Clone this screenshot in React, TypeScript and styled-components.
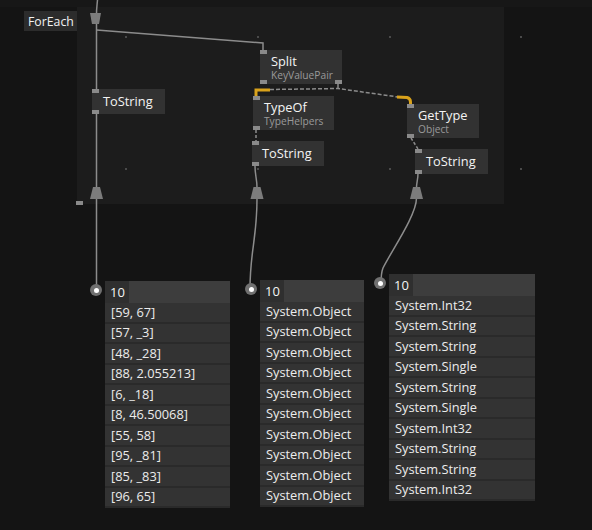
import React from "react";
import styled, { createGlobalStyle } from "styled-components";

const GlobalStyle = createGlobalStyle`
  html, body { margin: 0; padding: 0; background: #141414; }
  * { box-sizing: border-box; }
`;

const FONT = `"Open Sans", "Noto Sans", "DejaVu Sans", sans-serif`;

const Canvas = styled.div`
  position: relative;
  width: 592px;
  height: 530px;
  overflow: hidden;
  background: #141414;
  font-family: ${FONT};
`;

const TopStrip = styled.div`
  height: 7px;
  background: #171717;
`;

const Region = styled.div<{ $x: number; $y: number; $w: number; $h: number }>`
  position: absolute;
  left: ${(p) => p.$x}px;
  top: ${(p) => p.$y}px;
  width: ${(p) => p.$w}px;
  height: ${(p) => p.$h}px;
  background: #1c1c1c;
`;

const Links = styled.svg`
  position: absolute;
  left: 0;
  top: 0;
  width: 592px;
  height: 530px;
`;

const RegionLabel = styled.div<{ $x: number; $y: number }>`
  position: absolute;
  left: ${(p) => p.$x}px;
  top: ${(p) => p.$y}px;
  height: 20px;
  padding: 0 3px 0 4px;
  display: flex;
  align-items: center;
  background: #2c2c2c;
  color: #f2f2f2;
  font-size: 12.3px;
`;

const NodeBox = styled.div<{ $x: number; $y: number; $w: number; $h: number; $pl: number }>`
  position: absolute;
  left: ${(p) => p.$x}px;
  top: ${(p) => p.$y}px;
  width: ${(p) => p.$w}px;
  height: ${(p) => p.$h}px;
  padding-left: ${(p) => p.$pl}px;
  background: #323232;
  display: flex;
  flex-direction: column;
  justify-content: center;
`;

const Title = styled.div`
  color: #f4f4f4;
  font-size: 12.8px;
  line-height: 15px;
`;

const Sub = styled.div`
  color: #9a9a9a;
  font-size: 10.2px;
  line-height: 12px;
`;

const Pin = styled.div<{ $pos: "tl" | "bl" | "br" }>`
  position: absolute;
  width: 7px;
  height: 4px;
  background: #8a8a8a;
  ${(p) => (p.$pos === "tl" ? "top: 0; left: 0;" : "")}
  ${(p) => (p.$pos === "bl" ? "bottom: 0; left: 0;" : "")}
  ${(p) => (p.$pos === "br" ? "bottom: 0; right: 0;" : "")}
`;

type NodeProps = {
  x: number;
  y: number;
  w: number;
  h: number;
  pl: number;
  title: string;
  sub?: string;
  outRight?: boolean;
};

const Node = ({ x, y, w, h, pl, title, sub, outRight }: NodeProps) => (
  <NodeBox $x={x} $y={y} $w={w} $h={h} $pl={pl}>
    <Title>{title}</Title>
    {sub && <Sub>{sub}</Sub>}
    <Pin $pos="tl" />
    <Pin $pos={outRight ? "br" : "bl"} />
    {outRight && <Pin $pos="bl" />}
  </NodeBox>
);

const Panel = styled.div<{ $x: number; $y: number; $w: number }>`
  position: absolute;
  left: ${(p) => p.$x}px;
  top: ${(p) => p.$y}px;
  width: ${(p) => p.$w}px;
  display: flex;
  flex-direction: column;
  background: #333333;
  color: #ececec;
  font-size: 12.8px;
`;

const PanelHeader = styled.div`
  height: 22px;
  background: #3d3d3d;
  display: flex;
`;

const CountCell = styled.div<{ $w: number }>`
  width: ${(p) => p.$w}px;
  background: #2f2f2f;
  display: flex;
  align-items: center;
  padding-left: 5px;
  color: #f4f4f4;
  font-size: 13px;
`;

const Row = styled.div`
  height: 20.5px;
  display: flex;
  align-items: center;
  padding-left: 6px;
  padding-bottom: 1px;
  border-bottom: 2px solid #2a2a2a;
  white-space: nowrap;
`;

const PinDot = styled.div`
  position: absolute;
  left: -15px;
  top: 3px;
  width: 12px;
  height: 12px;
  border-radius: 50%;
  background: #707070;
  display: flex;
  align-items: center;
  justify-content: center;
  &::after {
    content: "";
    width: 5px;
    height: 5px;
    border-radius: 50%;
    background: #ffffff;
  }
`;

type InspectorProps = { x: number; y: number; w: number; cw: number; rows: string[] };

const Inspector = ({ x, y, w, cw, rows }: InspectorProps) => (
  <Panel $x={x} $y={y} $w={w}>
    <PinDot />
    <PanelHeader>
      <CountCell $w={cw}>{rows.length}</CountCell>
    </PanelHeader>
    {rows.map((r, i) => (
      <Row key={i}>{r}</Row>
    ))}
  </Panel>
);

const pairs = [
  "[59, 67]",
  "[57, _3]",
  "[48, _28]",
  "[88, 2.055213]",
  "[6, _18]",
  "[8, 46.50068]",
  "[55, 58]",
  "[95, _81]",
  "[85, _83]",
  "[96, 65]",
];

const objects = Array.from({ length: 10 }, () => "System.Object");

const types = [
  "System.Int32",
  "System.String",
  "System.String",
  "System.Single",
  "System.String",
  "System.Single",
  "System.Int32",
  "System.String",
  "System.String",
  "System.Int32",
];

const dots: [number, number][] = [
  [126, 37], [258, 37], [390, 37], [521, 37],
  [126, 169], [258, 169], [390, 169], [521, 169],
];

const LINK = "#8c8c8c";
const YELLOW = "#d9a21b";

export default function App() {
  return (
    <>
      <GlobalStyle />
      <Canvas>
        <TopStrip />
        <Region $x={77} $y={7} $w={427} $h={197} />
        <Links viewBox="0 0 592 530">
          {dots.map(([x, y], i) => (
            <rect key={i} x={x - 1} y={y - 1} width={2} height={2} fill="#4a4a4a" />
          ))}
          <rect x={76} y={201} width={7} height={4} fill="#8a8a8a" />

          <path d="M97.5 0 C97 6 96.5 8 96.5 14 L96.5 90" stroke={LINK} strokeWidth={1.5} fill="none" />
          <path d="M96.5 30 L263 43 L263 51" stroke={LINK} strokeWidth={1.5} fill="none" />
          <path d="M96.5 112 L96.5 292" stroke={LINK} strokeWidth={1.5} fill="none" />

          <path d="M338 84 L338 88.5" stroke={LINK} strokeWidth={1.5} fill="none" />
          <path d="M270 89.5 L338 88.5 L398 97" stroke={LINK} strokeWidth={1.5} strokeDasharray="4 2" fill="none" />
          <path d="M256 97 L256 90 L270 90" stroke={YELLOW} strokeWidth={3} fill="none" />
          <path d="M397 97 L407 97.5 Q410.5 98.5 410.5 102 L410.5 105" stroke={YELLOW} strokeWidth={3} fill="none" />
          <path d="M410.5 107 L410.5 136" stroke="#9a9a9a" strokeWidth={1.5} fill="none" />

          <path d="M256 130 L256 141" stroke={LINK} strokeWidth={1.5} strokeDasharray="3 2" fill="none" />
          <path d="M411 138 L418 149" stroke={LINK} strokeWidth={1.5} strokeDasharray="3 2" fill="none" />

          <path d="M255 166 C255 176 257 178 257 188" stroke={LINK} strokeWidth={1.5} fill="none" />
          <path d="M257 198 C257 240 250 250 250 289" stroke={LINK} strokeWidth={1.5} fill="none" />
          <path d="M418 173 C418 180 416.5 182 416.5 188" stroke={LINK} strokeWidth={1.5} fill="none" />
          <path d="M416.5 198 C416.5 215 392 250 383 268 C381 273 381 278 381 284" stroke={LINK} strokeWidth={1.5} fill="none" />

          <polygon points="90,13 101,13 99,24 92,24" fill="#7c7c7c" />
          <polygon points="93,187 100,187 103,199 90,199" fill="#7c7c7c" />
          <polygon points="253.5,187 260.5,187 263.5,199 250.5,199" fill="#7c7c7c" />
          <polygon points="413,187 420,187 423,199 410,199" fill="#7c7c7c" />
        </Links>

        <RegionLabel $x={24} $y={11}>ForEach</RegionLabel>

        <Node x={92} y={89} w={73} h={25} pl={11} title="ToString" />
        <Node x={260} y={50} w={82} h={34} pl={11} title="Split" sub="KeyValuePair" outRight />
        <Node x={253} y={96} w={81} h={34} pl={11} title="TypeOf" sub="TypeHelpers" />
        <Node x={252} y={141} w={72} h={25} pl={10} title="ToString" />
        <Node x={407} y={104} w={72} h={34} pl={11} title="GetType" sub="Object" />
        <Node x={415} y={149} w={73} h={25} pl={11} title="ToString" />

        <Inspector x={105} y={281} w={125} cw={24} rows={pairs} />
        <Inspector x={260} y={280} w={104} cw={24} rows={objects} />
        <Inspector x={389} y={274} w={146} cw={24} rows={types} />
      </Canvas>
    </>
  );
}
